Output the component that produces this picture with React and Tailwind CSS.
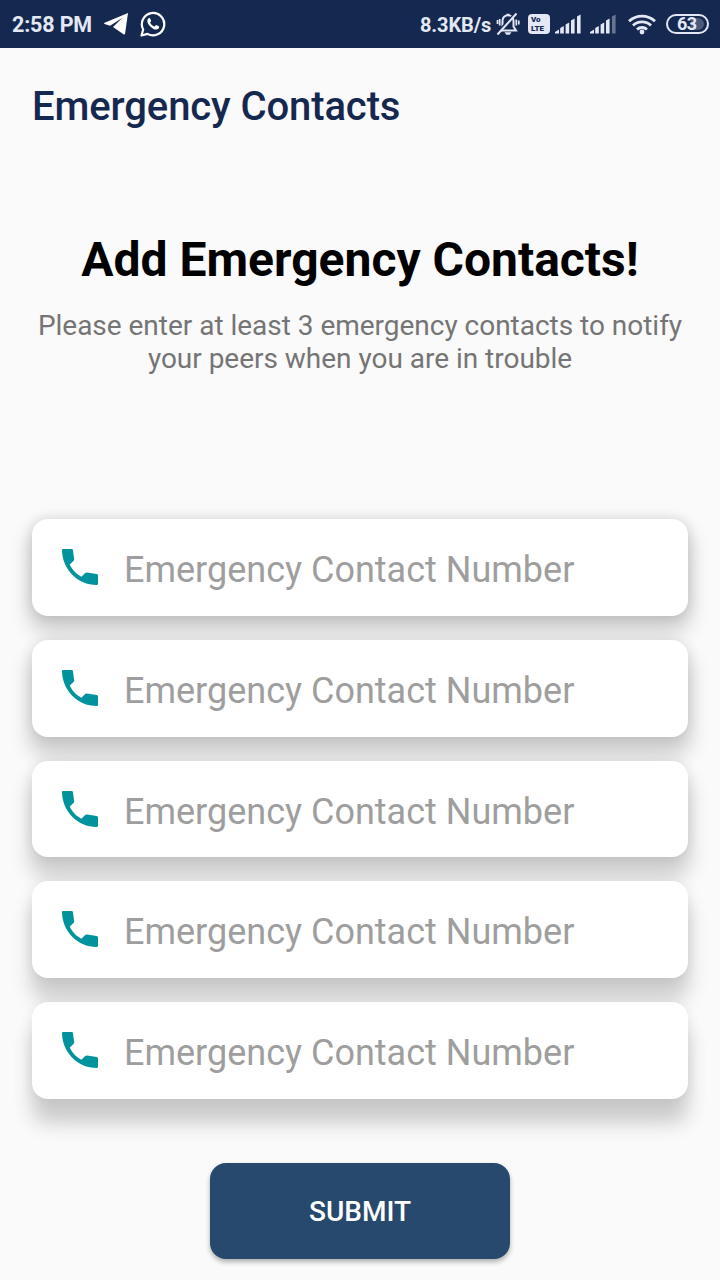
const rows = [
  { id: 1, shadow: 'shadow-[0_13px_20px_3px_rgba(0,0,0,0.18),0_0_14px_0_rgba(0,0,0,0.13)]' },
  { id: 2, shadow: 'shadow-[0_16px_20px_3px_rgba(0,0,0,0.18),0_0_14px_0_rgba(0,0,0,0.10)]' },
  { id: 3, shadow: 'shadow-[0_18px_20px_2px_rgba(0,0,0,0.18),0_0_14px_0_rgba(0,0,0,0.09)]' },
  { id: 4, shadow: 'shadow-[0_21px_20px_1px_rgba(0,0,0,0.18),0_0_14px_0_rgba(0,0,0,0.08)]' },
  { id: 5, shadow: 'shadow-[0_24px_20px_0px_rgba(0,0,0,0.19),0_0_14px_0_rgba(0,0,0,0.07)]' },
];

function PhoneIcon() {
  return (
    <svg viewBox="0 0 24 24" className="-mt-px size-12 shrink-0 fill-[#00929d]">
      <path d="M20.3 15.5l-4.800-.75c-.35-.05-.65.05-.9.3l-1.9 1.850C10 15.500 7.900 13.200 6.900 10.800L8.850 8.900c.2-.2.3-.5.25-.8L8.450 3.500c-.05-.3-.25-.5-.55-.5H3.600c-.35 0-.6.25-.6.6C3.200 13.100 10.700 21 20.400 21c.35 0 .6-.25.6-.6v-4.100c0-.4-.3-.75-.7-.8z" />
    </svg>
  );
}

function Signal({ dim }) {
  return (
    <svg viewBox="0 0 28 22" className="h-[22px] w-7 fill-[#e3e8f4]">
      <path d="M0 20.500v-1.500l4-2.500v4zM5.200 15l3.600-2v7.500H5.200zM10.600 11.500l3.600-2v11h-3.600zM16 7.500l3.600-2v15H16z" />
      <path d="M22 3.500L25.600 1.500v19H22z" opacity={dim ? 0.4 : 1} />
    </svg>
  );
}

function StatusBar() {
  return (
    <header className="flex h-12 items-center bg-[#15284f] text-[#e3e8f4]">
      <span className="ml-3 w-[92px] pt-[2px] text-[21.5px] leading-6 font-bold tracking-[-0.15px] whitespace-nowrap">2:58 PM</span>
      <svg viewBox="0 0 24 22" className="h-[22px] w-6 fill-white">
        <path d="M24 0L.6 9.700c-.8.3-.8 1 0 1.300l5.400 1.800L18.500 4.700 9 14l10.500 7.300c.8.5 1.400.3 1.600-.7z" />
      </svg>
      <svg viewBox="0 0 26 26" className="ml-3 size-[26px]" fill="none">
        <path d="M1.500 24.500l1.700-6A11.200 11.200 0 1 1 7.500 22.900z" stroke="white" strokeWidth="2.200" strokeLinejoin="round" />
        <path d="M9.200 7c-.6 0-1.900 1-1.900 2.900 0 3.500 5.200 8.600 8.900 8.600 1.800 0 3-1.200 3-2.700 0-.7-2.700-1.900-3.100-1.900-.5 0-1.100 1.600-1.700 1.500-1.600-.4-3.600-2.200-4.200-3.700-.2-.6 1-1.100.9-1.700C11 9.300 10.200 7 9.200 7z" fill="white" />
      </svg>
      <div className="ml-auto flex items-center pr-[11px]">
        <span className="w-[77px] pt-px text-[20px] leading-6 font-bold tracking-[-0.1px] whitespace-nowrap">8.3KB/s</span>
        <svg viewBox="0 0 24 24" className="-ml-px h-6 w-6" fill="none" stroke="#e3e8f4" strokeWidth="2">
          <path d="M4.500 18.500h15.500l-2.500-4V8.700a5.500 5.500 0 0 0-11 0v5.800z" />
          <path d="M10.500 2.500h3M20.300 7.500v6M22.800 8.500v4M3.700 7v6.500M1.500 8v4" strokeWidth="1.700" />
          <path d="M19 1.200L1 20.500" stroke="#15284f" strokeWidth="1.800" />
          <path d="M20.500 1.500L1.500 22.500" />
          <path d="M8.500 20.300h7l-1.800 2.400h-3.400z" fill="#e3e8f4" stroke="none" />
        </svg>
        <div className="ml-2 flex h-5 w-[22px] flex-col justify-center rounded-[4px] bg-[#e3e8f4] pl-[3px] text-[8px] leading-[9px] font-black text-[#15284f]">
          <span>Vo</span>
          <span>LTE</span>
        </div>
        <div className="ml-[5px]"><Signal /></div>
        <div className="ml-[7px]"><Signal dim /></div>
        <svg viewBox="0 0 30 22" className="ml-[9px] h-[22px] w-[30px]" fill="none" stroke="#e3e8f4" strokeWidth="2.800">
          <path d="M2 8.200a19 19 0 0 1 26 0M6 12.500a13 13 0 0 1 18 0M10 16.500a7.300 7.300 0 0 1 10 0" />
          <circle cx="15" cy="19" r="2.400" fill="#e3e8f4" stroke="none" />
        </svg>
        <div className="ml-[9px] flex h-5 w-[43px] items-center rounded-full border-2 border-[#e3e8f4] px-[3px] py-[2px]">
          <div className="flex h-full w-full items-center rounded-full bg-[linear-gradient(90deg,transparent_60%,#4a5a7c_60%)] pl-[6px] text-[18px] leading-4 font-bold tracking-[-0.6px]">63</div>
        </div>
      </div>
    </header>
  );
}

export default function App() {
  return (
    <div className="flex h-[1280px] w-[720px] flex-col overflow-hidden bg-[#fafafa] font-['Roboto',sans-serif]">
      <StatusBar />
      <h1 className="mt-[35px] ml-8 text-[40px] leading-[47px] font-medium tracking-[-0.1px] text-[#15284f]">Emergency Contacts</h1>
      <h2 className="mt-[102px] text-center text-[48px] leading-[56px] font-bold text-black">Add Emergency Contacts!</h2>
      <p className="mt-[21px] text-center text-[28px] leading-[33px] tracking-[-0.02px] text-[#757575]">
        Please enter at least 3 emergency contacts to notify
        <br />
        your peers when you are in trouble
      </p>
      <main className="mx-8 mt-[144.300px] flex flex-col gap-6">
        {rows.map(({ id, shadow }) => (
          <div key={id} className={`flex h-[96.700px] items-center rounded-[16px] bg-white pl-6 ${shadow}`}>
            <PhoneIcon />
            <span className="ml-5 pt-[5px] text-[36px] leading-[42px] text-[#9e9e9e]">Emergency Contact Number</span>
          </div>
        ))}
      </main>
      <button className="mx-auto mt-16 h-24 w-[300px] shrink-0 rounded-[16px] bg-[#27496d] pt-[3px] text-[28px] font-medium text-white shadow-[0_3px_5px_rgba(0,0,0,0.3)]">
        SUBMIT
      </button>
    </div>
  );
}
